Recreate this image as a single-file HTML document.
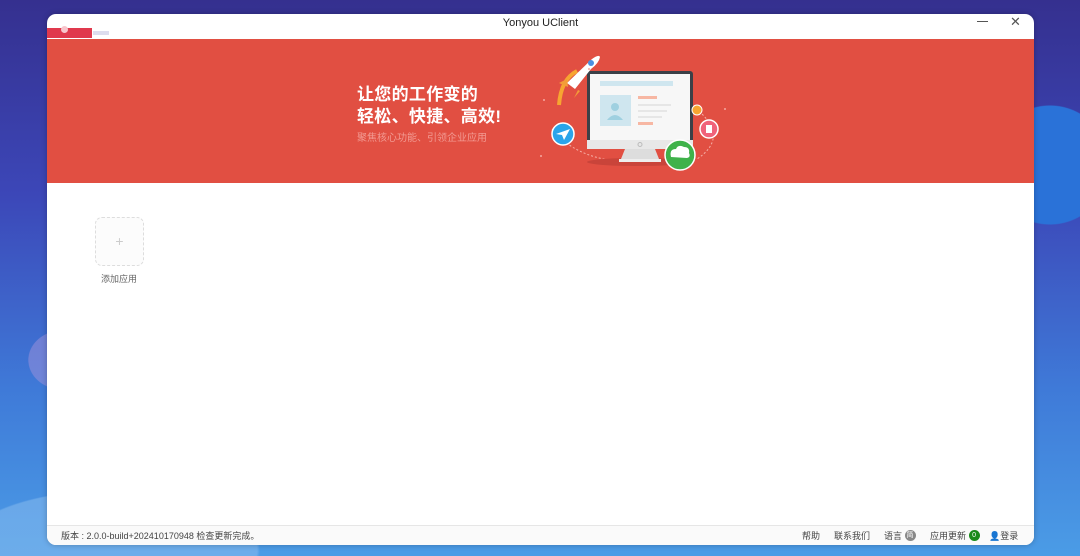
<!DOCTYPE html>
<html style="width:1080px;height:556px;overflow:hidden;background:#3c47b8"><head><meta charset="utf-8"><style>
*{margin:0;padding:0;box-sizing:border-box}
body{width:1080px;height:556px;overflow:hidden;position:relative;font-family:"Liberation Sans","Noto Sans CJK SC",sans-serif;
background:
radial-gradient(circle 60px at 1050px 165px,#2a72d8 59px,rgba(42,114,216,0) 60px),
radial-gradient(ellipse 35px 30px at 63px 360px,rgba(170,150,220,.45) 98%,rgba(170,150,220,0) 100%),
radial-gradient(ellipse 150px 60px at 110px 550px,rgba(140,190,240,.5) 98%,rgba(140,190,240,0) 100%),
linear-gradient(180deg,#35308f 0%,#3c47b8 35%,#3f7ad8 70%,#4b9ce6 100%);}
.win{position:absolute;left:47px;top:14px;width:987px;height:531px;background:#fff;border-radius:9px;overflow:hidden;box-shadow:0 0 6px rgba(0,0,0,.25)}
.title{height:25px;position:relative;text-align:center;font-size:11px;line-height:18px;color:#222}
.tab{position:absolute;left:0;top:14px;width:45px;height:10px;background:#e0394d}
.tab2{position:absolute;left:46px;top:17px;width:16px;height:4px;background:#dde}
.dot{position:absolute;left:14px;top:12px;width:7px;height:7px;border-radius:50%;background:#f7c5cc}
.min{position:absolute;left:930px;top:7px;width:11px;height:1px;background:#555}
.x{position:absolute;left:963px;top:0px;font-size:13px;color:#555;line-height:16px}
.banner{position:absolute;top:25px;left:0;width:987px;height:144px;background:#e14f42}
.h1{position:absolute;left:310px;top:45px;color:#fff;font-weight:bold;font-size:17px;line-height:22px;letter-spacing:.3px}
.sub{position:absolute;left:310px;top:90px;color:#f29a92;font-size:10px}
.add{position:absolute;left:48px;top:203px;width:49px;height:49px;border:1px dashed #ddd;border-radius:7px;background:#fcfcfc;text-align:center;line-height:47px;color:#ccc;font-size:14px}
.addt{position:absolute;left:54px;top:258px;font-size:9px;color:#666}
.foot{position:absolute;left:0;top:511px;width:987px;height:20px;border-top:1px solid #e6e6e6;background:#fafafa;font-size:9px;color:#444;line-height:20px}
.foot span{position:absolute;top:0}
.badge{display:inline-block;width:11px;height:11px;border-radius:50%;vertical-align:middle;margin-top:-2px;color:#fff;font-size:7px;line-height:11px;text-align:center;font-style:normal}
</style></head><body>
<div class="win">
 <div class="title">Yonyou UClient<div class="tab"></div><div class="dot"></div><div class="tab2"></div><div class="min"></div><div class="x">✕</div></div>
 <div class="banner">
  <div class="h1">让您的工作变的<br>轻松、快捷、高效!</div>
  <div class="sub">聚焦核心功能、引领企业应用</div>
  <svg style="position:absolute;left:490px;top:10px" width="200" height="125" viewBox="490 0 200 125">
   <path d="M505 80 Q540 125 640 110" stroke="#f5b0a8" stroke-dasharray="2 2" fill="none"/>
   <path d="M655 65 Q680 90 650 110" stroke="#f5b0a8" stroke-dasharray="2 2" fill="none"/>
   <ellipse cx="590" cy="113" rx="50" ry="4" fill="#c9443a"/>
   <rect x="540" y="22" width="106" height="78" rx="3" fill="#3b4047"/>
   <rect x="543" y="25" width="100" height="66" fill="#f7f7f7"/>
   <rect x="540" y="91" width="106" height="9" fill="#e8e8e8"/>
   <circle cx="593" cy="95.5" r="2" fill="none" stroke="#bbb"/>
   <path d="M578 100 L608 100 L612 110 L574 110Z" fill="#ddd"/>
   <rect x="572" y="110" width="42" height="3" fill="#eee"/>
   <rect x="553" y="32" width="73" height="5" fill="#cfe6ef"/>
   <rect x="553" y="46" width="31" height="31" fill="#cfe6ef"/>
   <circle cx="568" cy="58" r="4" fill="#9fd0e0"/><path d="M560 71 Q568 61 576 71Z" fill="#9fd0e0"/>
   <rect x="591" y="47" width="19" height="3" fill="#f7b7a3"/>
   <rect x="591" y="55" width="33" height="2" fill="#e6e6e6"/><rect x="591" y="61" width="29" height="2" fill="#e6e6e6"/><rect x="591" y="67" width="24" height="2" fill="#e6e6e6"/>
   <rect x="591" y="73" width="15" height="3" fill="#f7b7a3"/>
   <path d="M512 56 Q514 30 530 22" stroke="#f7a531" stroke-width="4" fill="none"/>
   <path d="M520 34 L545 10 Q552 5 553 8 Q552 14 544 20 L528 40Z" fill="#fff"/>
   <circle cx="544" cy="14" r="3" fill="#4a90e2"/>
   <path d="M520 30 L512 34 L521 38Z M531 41 L527 49 L533 42Z" fill="#f39c38"/>
   <circle cx="516" cy="85" r="11" fill="#2aa4ea" stroke="#fff" stroke-width="1.5"/>
   <path d="M509 85 L523 80 L517 91 L515 86Z" fill="#fff"/>
   <circle cx="633" cy="106" r="15" fill="#3fb24a" stroke="#fff" stroke-width="1.5"/>
   <path d="M624 108 Q622 100 629 100 Q631 95 637 98 Q643 98 642 104 Q644 108 640 109Z" fill="#fff"/>
   <circle cx="650" cy="61" r="5" fill="#f7a531" stroke="#fff"/>
   <circle cx="662" cy="80" r="9" fill="#f0637a" stroke="#fff" stroke-width="1.5"/>
   <rect x="659" y="76" width="6" height="8" fill="#fff"/>
   <circle cx="542" cy="20" r="1" fill="#f5a8a0"/><circle cx="497" cy="51" r="1" fill="#f5a8a0"/><circle cx="494" cy="107" r="1" fill="#f5a8a0"/><circle cx="678" cy="60" r="1" fill="#f5a8a0"/>
  </svg>
 </div>
 <div class="add">+</div>
 <div class="addt">添加应用</div>
 <div class="foot">
  <span style="left:14px">版本 : 2.0.0-build+202410170948  检查更新完成。</span>
  <span style="left:755px">帮助</span>
  <span style="left:787px">联系我们</span>
  <span style="left:837px">语言 <i class="badge" style="background:#888">简</i></span>
  <span style="left:883px">应用更新 <i class="badge" style="background:#1a8a1a">0</i></span>
  <span style="left:942px">👤登录</span>
 </div>
</div>
</body></html>
